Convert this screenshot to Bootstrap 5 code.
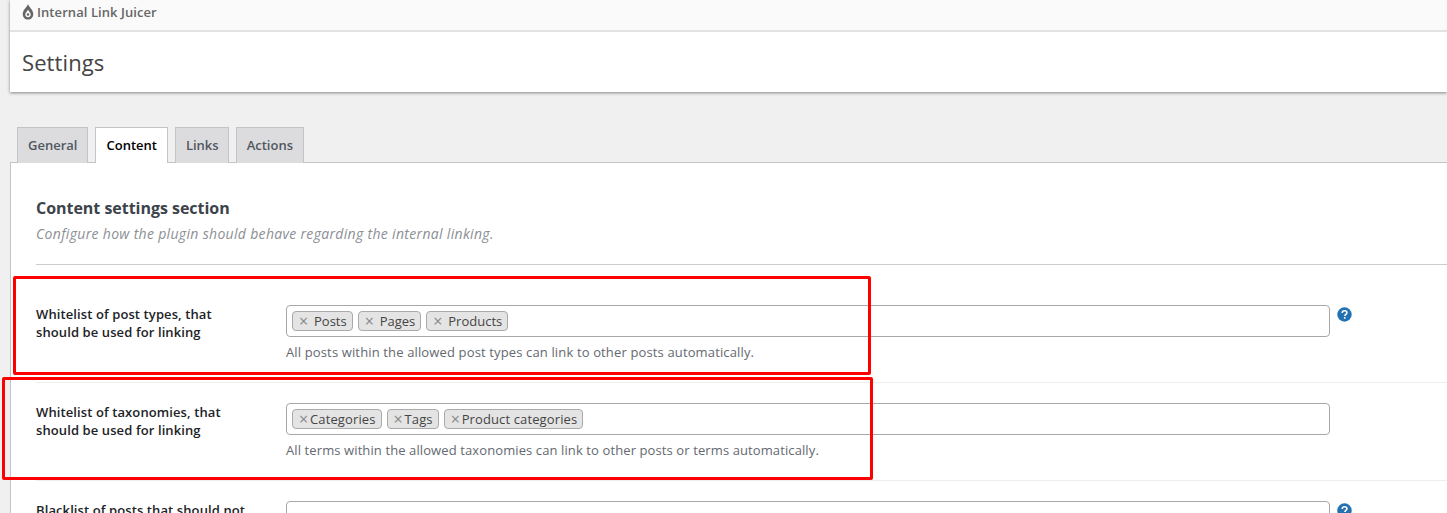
<!DOCTYPE html>
<html lang="en">
<head>
<meta charset="utf-8">
<title>Settings</title>
<link href="https://cdn.jsdelivr.net/npm/bootstrap@5.3.0/dist/css/bootstrap.min.css" rel="stylesheet">
<style>
html,body{height:513px;overflow:hidden}
body{background:#f0f0f0;font-family:"Open Sans","Noto Sans",sans-serif;font-size:13px;color:#444;position:relative}
.wp-head{margin-left:10px;background:#fff;box-shadow:0 1px 3px rgba(0,0,0,.45)}
.brand-bar{height:32px;background:#fafafa;border-bottom:2px solid #e2e2e2;padding:0 12px;color:#666;font-weight:600;font-size:13px;letter-spacing:.07px;gap:3px}
.brand-bar svg{width:12px;height:16px;margin-bottom:6px}
.brand-bar span{margin-bottom:5px}
.title-bar{height:60px;padding:0 12px;font-size:22px;color:#444;letter-spacing:.1px}
.tab-strip{margin:35px 0 0 17px;gap:7px;border:0;height:35px;position:relative;z-index:1}
.tab-item{height:36px;padding:0 10px;background:#dcdcde;border:1px solid #c3c4c7;border-bottom:0;color:#50575e;font-weight:600;font-size:13px}
.tab-on{background:#fff;color:#000}
.tab-snug{padding-right:9px}
.panel-box{margin-left:10px;background:#fff;border-top:1px solid #c3c4c7;border-left:1px solid #c3c4c7;height:400px}
.section-top{margin-left:25px;padding:34px 0 20px;border-bottom:1px solid #ccc}
.section-top h2{font-size:16px;font-weight:700;color:#3c434a;margin:0 0 5px;line-height:22px;letter-spacing:-.03px}
.section-top p{margin:0;font-style:italic;color:#8c8f94;font-size:14px;line-height:20px;letter-spacing:.32px}
.field-row{margin-left:25px;padding:20px 0 0;height:98px;border-bottom:1px solid #eee}
.field-row.first{height:118px;padding-top:40px}
.field-label{width:250px;flex:none;font-weight:600;font-size:13px;line-height:18px;color:#1d2327;letter-spacing:.1px}
.field-main{width:1044px;flex:none}
.select-box{height:32px;border:1px solid #a7a7a7;border-radius:4px;padding:0 5px;gap:5px}
.chip{height:20px;background:#e4e4e4;border:1px solid #aaa;border-radius:4px;padding:0 5px;font-size:13px;color:#444;line-height:18px;white-space:nowrap}
.chip i{font-style:normal;color:#888;display:inline-block;width:16px;padding-left:1px;font-size:16px;line-height:16px;vertical-align:-1px;text-align:left}
.chip.tight{letter-spacing:.12px}
.chip.tight i{width:12px}
.field-note{margin:6px 0 0;color:#646970;font-size:13px;line-height:18px;letter-spacing:.14px}
.field-note.snug{letter-spacing:.105px}
.help-dot{width:15px;height:15px;margin:2px 0 0 7px;flex:none}
.red-box{position:absolute;border:3px solid #f00;border-radius:2px;pointer-events:none}
.red-a{left:13px;top:276px;width:858px;height:99px}
.red-b{left:2px;top:377px;width:871px;height:103px}
</style>
</head>
<body>
<header class="wp-head">
  <div class="brand-bar d-flex align-items-center">
    <svg viewBox="0 0 11 15" aria-hidden="true"><path fill="#666" d="M5.5 0C5 2.5 1 5 .6 8.8.3 12 2.6 14.6 5.5 14.6s5.2-2.6 4.9-5.8C10 5 6 2.5 5.5 0z"/><path fill="#fafafa" d="M5.5 5.5 3 9.2a2.6 2.6 0 1 0 5 0z"/><circle cx="5.5" cy="9.9" r="1.2" fill="#666"/></svg>
    <span>Internal Link Juicer</span>
  </div>
  <div class="title-bar d-flex align-items-center">Settings</div>
</header>
<nav class="tab-strip d-flex">
  <div class="tab-item d-flex align-items-center">General</div>
  <div class="tab-item tab-on d-flex align-items-center">Content</div>
  <div class="tab-item tab-snug d-flex align-items-center">Links</div>
  <div class="tab-item d-flex align-items-center">Actions</div>
</nav>
<main class="panel-box">
  <div class="section-top">
    <h2>Content settings section</h2>
    <p>Configure how the plugin should behave regarding the internal linking.</p>
  </div>
  <div class="field-row first d-flex">
    <div class="field-label">Whitelist of post types, that<br>should be used for linking</div>
    <div class="field-main">
      <div class="select-box d-flex align-items-center">
        <span class="chip"><i>×</i>Posts</span><span class="chip"><i>×</i>Pages</span><span class="chip"><i>×</i>Products</span>
      </div>
      <p class="field-note">All posts within the allowed post types can link to other posts automatically.</p>
    </div>
    <svg class="help-dot" viewBox="0 0 15 15" aria-hidden="true"><circle cx="7.5" cy="7.5" r="7.2" fill="#2271b1"/><path d="M5.2 5.9c0-1.4 1-2.2 2.4-2.2 1.3 0 2.3.8 2.3 2 0 1.7-2 1.6-2 3.2" fill="none" stroke="#fff" stroke-width="1.6"/><rect x="6.9" y="10" width="1.6" height="1.7" fill="#fff"/></svg>
  </div>
  <div class="field-row d-flex">
    <div class="field-label">Whitelist of taxonomies, that<br>should be used for linking</div>
    <div class="field-main">
      <div class="select-box d-flex align-items-center">
        <span class="chip tight"><i>×</i>Categories</span><span class="chip tight"><i>×</i>Tags</span><span class="chip tight"><i>×</i>Product categories</span>
      </div>
      <p class="field-note snug">All terms within the allowed taxonomies can link to other posts or terms automatically.</p>
    </div>
  </div>
  <div class="field-row d-flex">
    <div class="field-label">Blacklist of posts that should not</div>
    <div class="field-main"><div class="select-box"></div></div>
    <svg class="help-dot" viewBox="0 0 15 15" aria-hidden="true"><circle cx="7.5" cy="7.5" r="7.2" fill="#2271b1"/><path d="M5.2 5.9c0-1.4 1-2.2 2.4-2.2 1.3 0 2.3.8 2.3 2 0 1.7-2 1.6-2 3.2" fill="none" stroke="#fff" stroke-width="1.6"/><rect x="6.9" y="10" width="1.6" height="1.7" fill="#fff"/></svg>
  </div>
</main>
<div class="red-box red-a"></div>
<div class="red-box red-b"></div>
<script src="https://cdn.jsdelivr.net/npm/bootstrap@5.3.0/dist/js/bootstrap.bundle.min.js"></script>
</body>
</html>
